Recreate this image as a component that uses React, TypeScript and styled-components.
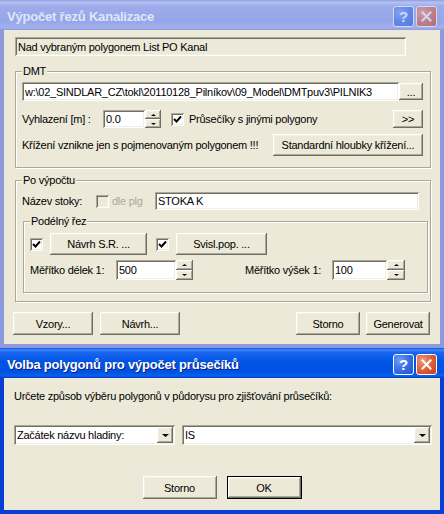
import React from "react";
import styled, { createGlobalStyle, css } from "styled-components";

const GlobalStyle = createGlobalStyle`
    html, body {
        margin: 0;
        padding: 0;
    }
    body {
        background: #ece9d8;
        font-family: "Liberation Sans", Arial, sans-serif;
        font-size: 11px;
        letter-spacing: -0.25px;
        color: #000;
    }
`;

const raised = css`
    background: #ece9d8;
    box-shadow: inset -1px -1px #716f64, inset 1px 1px #fff, inset -2px -2px #aca899, inset 2px 2px #f1efe2;
`;

const sunken = css`
    box-shadow: inset 1px 1px #aca899, inset -1px -1px #fff, inset 2px 2px #716f64, inset -2px -2px #f1efe2;
`;

const Screen = styled.div`
    width: 444px;
    height: 514px;
    overflow: hidden;
    display: flex;
    flex-direction: column;
`;

const Window = styled.div`
    display: flex;
    flex-direction: column;
    flex: none;
`;

const TitleBar = styled.div<{ $active?: boolean }>`
    height: 30px;
    box-sizing: border-box;
    display: flex;
    align-items: center;
    gap: 2px;
    padding: 3px 7px 0 7px;
    background: ${(p) =>
        p.$active
            ? "linear-gradient(to bottom, #0a4cd8 0%, #3d8cf6 6%, #1a66ee 14%, #0055e6 45%, #0052e0 80%, #0a5ef0 92%, #0042c4 100%)"
            : "linear-gradient(to bottom, #8f9ee0 0%, #b4c2f0 8%, #9daceb 20%, #95a5e7 70%, #a2b1ec 92%, #8c9bdd 100%)"};
`;

const TitleText = styled.span<{ $active?: boolean }>`
    flex: 1;
    font-family: "Liberation Sans", Arial, sans-serif;
    font-weight: bold;
    font-size: 13px;
    letter-spacing: -0.2px;
    color: ${(p) => (p.$active ? "#fff" : "#dfe7fa")};
    text-shadow: ${(p) => (p.$active ? "1px 1px #0a1e82" : "none")};
`;

const CaptionButton = styled.span<{ $kind: "help" | "close"; $active?: boolean }>`
    width: 21px;
    height: 21px;
    box-sizing: border-box;
    border: 1px solid #fff;
    border-radius: 3px;
    display: flex;
    align-items: center;
    justify-content: center;
    color: #fff;
    font-weight: bold;
    font-size: 15px;
    letter-spacing: 0;
    opacity: ${(p) => (p.$active ? 1 : 0.55)};
    background: ${(p) =>
        p.$kind === "help"
            ? "radial-gradient(circle at 30% 30%, #6f9df8 0%, #3a72ea 45%, #1f50d0 100%)"
            : "radial-gradient(circle at 30% 30%, #f29a7c 0%, #e2633f 45%, #c23a18 100%)"};
`;

const Frame = styled.div<{ $active?: boolean }>`
    display: flex;
    flex-direction: column;
    border: 4px solid ${(p) => (p.$active ? "#0a3fd4" : "#8c99dc")};
    border-top: none;
    background: #ece9d8;
`;

const MainBody = styled.div`
    display: flex;
    flex-direction: column;
    padding: 7px 0 9px 0;
`;

const PromptBody = styled.div`
    display: flex;
    flex-direction: column;
    padding: 12px 0 11px 0;
`;

const Row = styled.div<{ $top?: number; $left?: number; $center?: boolean }>`
    display: flex;
    align-items: center;
    justify-content: ${(p) => (p.$center ? "center" : "flex-start")};
    margin: ${(p) => p.$top ?? 0}px 0 0 ${(p) => p.$left ?? 0}px;
`;

const Group = styled.div<{ $top: number; $left: number; $width: number; $bottom: number }>`
    display: flex;
    flex-direction: column;
    box-sizing: border-box;
    width: ${(p) => p.$width}px;
    margin: ${(p) => p.$top}px 0 0 ${(p) => p.$left}px;
    padding: 0 7px ${(p) => p.$bottom}px 6px;
    border: 1px solid #aca899;
    box-shadow: inset 1px 1px #fff, 1px 1px #fff;
`;

const GroupTitle = styled.span`
    align-self: flex-start;
    margin-top: -7px;
    padding: 0 1px;
    line-height: 13px;
    background: #ece9d8;
`;

const Label = styled.span<{ $width?: number; $left?: number; $disabled?: boolean }>`
    flex: none;
    width: ${(p) => (p.$width ? `${p.$width}px` : "auto")};
    margin-left: ${(p) => p.$left ?? 0}px;
    line-height: 13px;
    white-space: nowrap;
    color: ${(p) => (p.$disabled ? "#aca899" : "#000")};
`;

const Edit = styled.div<{ $width: number; $height: number; $readOnly?: boolean; $left?: number }>`
    ${sunken};
    flex: none;
    box-sizing: border-box;
    width: ${(p) => p.$width}px;
    height: ${(p) => p.$height}px;
    margin-left: ${(p) => p.$left ?? 0}px;
    padding: 0 3px;
    display: flex;
    align-items: center;
    overflow: hidden;
    white-space: nowrap;
    background-color: ${(p) => (p.$readOnly ? "#ece9d8" : "#fff")};
`;

const Spin = styled.div<{ $width: number; $height: number }>`
    flex: none;
    display: flex;
    flex-direction: column;
    width: ${(p) => p.$width}px;
    height: ${(p) => p.$height}px;
`;

const SpinHalf = styled.div`
    ${raised};
    flex: 1;
    display: flex;
    align-items: center;
    justify-content: center;
`;

const PushButton = styled.div<{ $width: number; $height: number; $left?: number; $default?: boolean }>`
    ${raised};
    flex: none;
    box-sizing: border-box;
    width: ${(p) => p.$width}px;
    height: ${(p) => p.$height}px;
    margin-left: ${(p) => p.$left ?? 0}px;
    display: flex;
    align-items: center;
    justify-content: center;
    white-space: nowrap;
    ${(p) =>
        p.$default &&
        css`
            box-shadow: inset 0 0 0 1px #000, inset -2px -2px #716f64, inset 2px 2px #fff, inset -3px -3px #aca899,
                inset 3px 3px #f1efe2;
        `}
`;

const CheckBox = styled.span<{ $left?: number; $disabled?: boolean }>`
    ${sunken};
    flex: none;
    width: 13px;
    height: 13px;
    margin-left: ${(p) => p.$left ?? 0}px;
    display: flex;
    align-items: center;
    justify-content: center;
    background-color: ${(p) => (p.$disabled ? "#ece9d8" : "#fff")};
`;

const Spacer = styled.span`
    flex: 1;
`;

const Combo = styled.div<{ $width: number; $left?: number }>`
    ${sunken};
    flex: none;
    box-sizing: border-box;
    width: ${(p) => p.$width}px;
    height: 20px;
    margin-left: ${(p) => p.$left ?? 0}px;
    padding: 2px 2px 2px 3px;
    display: flex;
    align-items: center;
    background-color: #fff;
`;

const ComboText = styled.span`
    flex: 1;
    white-space: nowrap;
    overflow: hidden;
`;

const DropButton = styled.span`
    ${raised};
    flex: none;
    width: 16px;
    height: 16px;
    display: flex;
    align-items: center;
    justify-content: center;
`;

const Check = (): JSX.Element => (
    <svg width="9" height="9" viewBox="0 0 9 9">
        <polyline points="1,4 3.5,6.5 8,1.5" fill="none" stroke="#000" strokeWidth="1.9" />
    </svg>
);

const Arrow = ({ up, size }: { up?: boolean; size: number }): JSX.Element => (
    <svg width={size * 2 + 1} height={size} viewBox={`0 0 ${size * 2 + 1} ${size}`}>
        <polygon
            points={up ? `0,${size} ${size * 2 + 1},${size} ${size + 0.5},0` : `0,0 ${size * 2 + 1},0 ${size + 0.5},${size}`}
            fill="#000"
        />
    </svg>
);

const CloseGlyph = (): JSX.Element => (
    <svg width="11" height="11" viewBox="0 0 11 11">
        <path d="M1.5 1.5 L9.5 9.5 M9.5 1.5 L1.5 9.5" stroke="#fff" strokeWidth="2" strokeLinecap="square" />
    </svg>
);

const Caption = ({ title, active }: { title: string; active?: boolean }): JSX.Element => (
    <TitleBar $active={active}>
        <TitleText $active={active}>{title}</TitleText>
        <CaptionButton $kind="help" $active={active}>
            ?
        </CaptionButton>
        <CaptionButton $kind="close" $active={active}>
            <CloseGlyph />
        </CaptionButton>
    </TitleBar>
);

const SpinBox = ({ width, height }: { width: number; height: number }): JSX.Element => (
    <Spin $width={width} $height={height}>
        <SpinHalf>
            <Arrow up size={2} />
        </SpinHalf>
        <SpinHalf>
            <Arrow size={2} />
        </SpinHalf>
    </Spin>
);

const App = (): JSX.Element => {
    return (
        <Screen>
            <GlobalStyle />
            <Window>
                <Caption title="Výpočet řezů Kanalizace" />
                <Frame>
                    <MainBody>
                        <Row $left={11}>
                            <Edit $width={391} $height={19} $readOnly>
                                Nad vybraným polygonem List PO Kanal
                            </Edit>
                        </Row>

                        <Group $top={15} $left={11} $width={416} $bottom={11}>
                            <GroupTitle>DMT</GroupTitle>
                            <Row $top={4}>
                                <Edit $width={377} $height={19}>
                                    w:\02_SINDLAR_CZ\tokl\20110128_Pilníkov\09_Model\DMTpuv3\PILNIK3
                                </Edit>
                                <PushButton $width={24} $height={17}>
                                    ...
                                </PushButton>
                            </Row>
                            <Row $top={9}>
                                <Label $width={81}>Vyhlazení [m] :</Label>
                                <Edit $width={42} $height={18}>
                                    0.0
                                </Edit>
                                <SpinBox width={16} height={18} />
                                <CheckBox $left={10}>
                                    <Check />
                                </CheckBox>
                                <Label $left={5}>Průsečíky s jinými polygony</Label>
                                <Spacer />
                                <PushButton $width={30} $height={18}>
                                    &gt;&gt;
                                </PushButton>
                            </Row>
                            <Row $top={6}>
                                <Label>Křížení vznikne jen s pojmenovaným polygonem !!!</Label>
                                <Spacer />
                                <PushButton $width={150} $height={22}>
                                    Standardní hloubky křížení...
                                </PushButton>
                            </Row>
                        </Group>

                        <Group $top={12} $left={11} $width={416} $bottom={8}>
                            <GroupTitle>Po výpočtu</GroupTitle>
                            <Row $top={5}>
                                <Label $width={74}>Název stoky:</Label>
                                <CheckBox $disabled />
                                <Label $left={3} $width={43} $disabled>
                                    dle plg
                                </Label>
                                <Edit $width={264} $height={18}>
                                    STOKA K
                                </Edit>
                            </Row>
                            <Group $top={11} $left={1} $width={405} $bottom={12}>
                                <GroupTitle>Podélný řez</GroupTitle>
                                <Row $top={5}>
                                    <CheckBox>
                                        <Check />
                                    </CheckBox>
                                    <PushButton $width={97} $height={22} $left={7}>
                                        Návrh S.R. ...
                                    </PushButton>
                                    <CheckBox $left={9}>
                                        <Check />
                                    </CheckBox>
                                    <PushButton $width={91} $height={22} $left={7}>
                                        Svisl.pop. ...
                                    </PushButton>
                                </Row>
                                <Row $top={5}>
                                    <Label $width={86}>Měřítko délek 1:</Label>
                                    <Edit $width={60} $height={20}>
                                        500
                                    </Edit>
                                    <SpinBox width={17} height={20} />
                                    <Label $left={52} $width={87}>
                                        Měřítko výšek 1:
                                    </Label>
                                    <Edit $width={55} $height={20}>
                                        100
                                    </Edit>
                                    <SpinBox width={18} height={20} />
                                </Row>
                            </Group>
                        </Group>

                        <Row $top={10} $left={9}>
                            <PushButton $width={80} $height={23}>
                                Vzory...
                            </PushButton>
                            <PushButton $width={80} $height={23} $left={7}>
                                Návrh...
                            </PushButton>
                            <Spacer />
                            <PushButton $width={64} $height={23}>
                                Storno
                            </PushButton>
                            <PushButton $width={64} $height={23} $left={6}>
                                Generovat
                            </PushButton>
                            <Label $width={10} />
                        </Row>
                    </MainBody>
                </Frame>
            </Window>

            <Window>
                <Caption title="Volba polygonů pro výpočet průsečíků" active />
                <Frame $active>
                    <PromptBody>
                        <Row $left={10}>
                            <Label>Určete způsob výběru polygonů v půdorysu pro zjišťování průsečíků:</Label>
                        </Row>
                        <Row $top={22} $left={10}>
                            <Combo $width={161}>
                                <ComboText>Začátek názvu hladiny:</ComboText>
                                <DropButton>
                                    <Arrow size={3} />
                                </DropButton>
                            </Combo>
                            <Combo $width={250} $left={7}>
                                <ComboText>IS</ComboText>
                                <DropButton>
                                    <Arrow size={3} />
                                </DropButton>
                            </Combo>
                        </Row>
                        <Row $top={31} $center>
                            <PushButton $width={74} $height={23}>
                                Storno
                            </PushButton>
                            <PushButton $width={75} $height={23} $left={10} $default>
                                OK
                            </PushButton>
                        </Row>
                    </PromptBody>
                </Frame>
            </Window>
        </Screen>
    );
};

export default App;
